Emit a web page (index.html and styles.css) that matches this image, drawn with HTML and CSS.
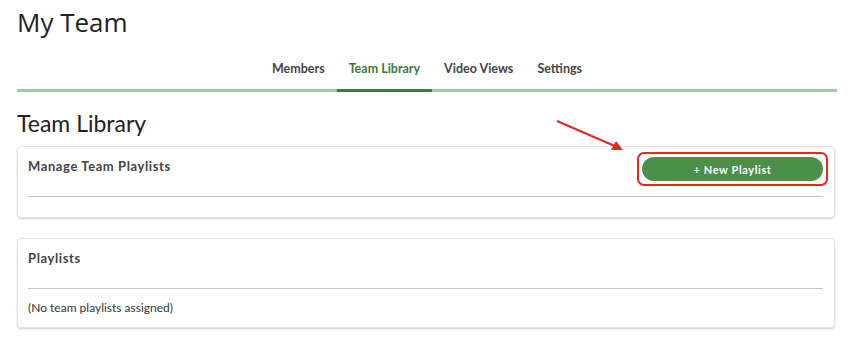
FILE: index.html
```html
<!DOCTYPE html>
<html lang="en">
<head>
    <meta charset="UTF-8">
    <meta name="viewport" content="width=device-width, initial-scale=1.0">
    <title>My Team</title>
    <link rel="stylesheet" href="styles.css">
</head>
<body>
    <div class="container">
        <h1>My Team</h1>

        <nav class="tabs">
            <a class="tab">Members</a>
            <a class="tab active">Team Library</a>
            <a class="tab">Video Views</a>
            <a class="tab">Settings</a>
        </nav>

        <h2>Team Library</h2>

        <div class="card">
            <div class="card-header">
                <h3>Manage Team Playlists</h3>
                <span class="highlight">
                    <button class="new-btn">+ New Playlist</button>
                </span>
            </div>
            <div class="card-body"></div>
        </div>

        <div class="card">
            <div class="card-header">
                <h3>Playlists</h3>
            </div>
            <div class="card-body">
                <p>(No team playlists assigned)</p>
            </div>
        </div>
    </div>

    <!-- annotation arrow -->
    <svg class="arrow" width="80" height="40" viewBox="0 0 80 40">
        <line x1="2" y1="2" x2="62" y2="28" stroke="#e02a1f" stroke-width="2"/>
        <polygon points="68,31 56,31 61,22" fill="#e02a1f"/>
    </svg>
</body>
</html>
```

FILE: styles.css
```css
* {
    margin: 0;
    padding: 0;
    box-sizing: border-box;
}

body {
    background-color: white;
    font-family: 'Lato', sans-serif;
    color: #333;
}

.container {
    margin: 0 13px 0 17px;
}

h1 {
    font-family: 'Open Sans', sans-serif;
    font-weight: 400;
    font-size: 26px;
    line-height: 36px;
    padding-top: 4px;
    color: #222;
}

.tabs {
    display: flex;
    justify-content: center;
    margin-top: 8px;
    border-bottom: 3px solid #9fca9d;
    margin-right: -2px;
}

.tab {
    padding: 11px 12px 10px;
    margin-bottom: -3px;
    border-bottom: 3px solid transparent;
    font-size: 12.5px;
    font-weight: bold;
    line-height: 20px;
    color: #444;
}

.tab.active {
    color: #3d7a3a;
    border-bottom-color: #3e7a3e;
}

h2 {
    font-weight: 400;
    font-size: 23px;
    line-height: 30px;
    margin: 16px 0 8px;
    color: #222;
}

.card {
    border: 1px solid #e4e4e4;
    border-radius: 4px;
    box-shadow: 0 1px 2px rgba(0, 0, 0, 0.2);
    padding: 10px 11px 10px 10px;
    margin-bottom: 20px;
}

.card-header {
    display: flex;
    justify-content: space-between;
    align-items: flex-start;
    min-height: 24px;
    border-bottom: 1px solid #c4c4c4;
    padding-bottom: 15px;
    box-sizing: content-box;
}

.card-header h3 {
    font-size: 13px;
    font-weight: bold;
    letter-spacing: 0.6px;
    line-height: 18px;
    color: #444;
}

.highlight {
    display: block;
    margin: -5px -5px -5px 0;
    padding: 3px;
    border: 2px solid #e02a1f;
    border-radius: 7px;
}

.new-btn {
    display: block;
    width: 181px;
    height: 24px;
    background-color: #4a8f4a;
    color: white;
    border: none;
    border-radius: 12px;
    font-family: 'Lato', sans-serif;
    font-size: 11px;
    font-weight: bold;
    letter-spacing: 0.6px;
}

.card-body {
    padding-top: 10px;
}

.card-body p {
    font-size: 12px;
    line-height: 18px;
    color: #333;
}

.arrow {
    position: absolute;
    left: 555px;
    top: 119px;
}
```
